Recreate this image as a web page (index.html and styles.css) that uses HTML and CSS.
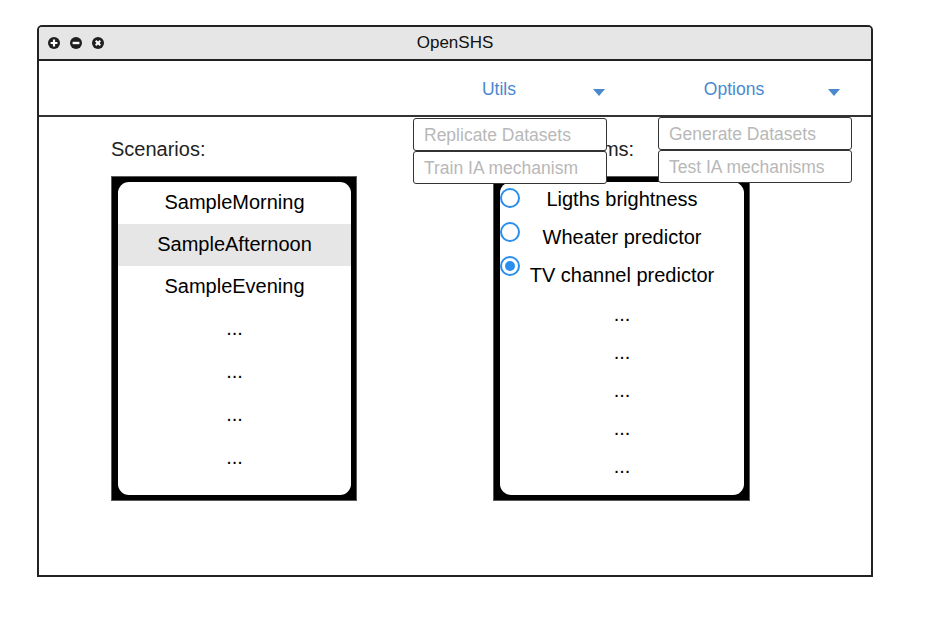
FILE: index.html
```html
<!DOCTYPE html>
<html lang="en">
<head>
<meta charset="utf-8">
<title>OpenSHS</title>
<link rel="stylesheet" href="styles.css">
</head>
<body>
<div class="window">
  <div class="titlebar">
    <div class="controls">
      <svg class="ctl" viewBox="0 0 12 12" width="12" height="12"><circle cx="6" cy="6" r="6" fill="#1f1f1f"/><path d="M6 2.6V9.4M2.6 6H9.4" stroke="#fff" stroke-width="2.2"/></svg>
      <svg class="ctl" viewBox="0 0 12 12" width="12" height="12"><circle cx="6" cy="6" r="6" fill="#1f1f1f"/><path d="M2.6 6H9.4" stroke="#fff" stroke-width="2.4"/></svg>
      <svg class="ctl" viewBox="0 0 12 12" width="12" height="12"><circle cx="6" cy="6" r="6" fill="#1f1f1f"/><path d="M3.7 3.7L8.3 8.3M8.3 3.7L3.7 8.3" stroke="#fff" stroke-width="2"/></svg>
    </div>
    <div class="title">OpenSHS</div>
    <div></div>
  </div>
  <nav class="nav">
    <div class="nav-item nav-utils">
      <span class="nav-label label-utils">Utils</span><span class="caret caret-utils"></span>
      <div class="menu menu-utils">
        <div class="menu-item">Replicate Datasets</div>
        <div class="menu-item">Train IA mechanism</div>
      </div>
    </div>
    <div class="nav-item nav-options">
      <span class="nav-label label-options">Options</span><span class="caret caret-options"></span>
      <div class="menu menu-options">
        <div class="menu-item">Generate Datasets</div>
        <div class="menu-item">Test IA mechanisms</div>
      </div>
    </div>
  </nav>
  <main class="main">
    <section class="col col-left">
      <div class="col-label">Scenarios:</div>
      <div class="frame frame-left">
        <ul class="list">
          <li class="row">SampleMorning</li>
          <li class="row selected">SampleAfternoon</li>
          <li class="row">SampleEvening</li>
          <li class="row dots">...</li>
          <li class="row dots">...</li>
          <li class="row dots">...</li>
          <li class="row dots">...</li>
        </ul>
      </div>
    </section>
    <section class="col col-right">
      <div class="col-label">IA mechanisms:</div>
      <div class="frame frame-right">
        <ul class="list rlist">
          <li class="rrow">Ligths brightness</li>
          <li class="rrow">Wheater predictor</li>
          <li class="rrow">TV channel predictor</li>
          <li class="rrow rdots">...</li>
          <li class="rrow rdots">...</li>
          <li class="rrow rdots">...</li>
          <li class="rrow rdots">...</li>
          <li class="rrow rdots">...</li>
          <span class="radio r1"></span>
          <span class="radio r2"></span>
          <span class="radio r3 checked"></span>
        </ul>
      </div>
    </section>
  </main>
</div>
</body>
</html>
```
FILE: styles.css
```css
* { box-sizing: border-box; }
html, body { margin: 0; padding: 0; background: #fff; }
body {
  font-family: "Liberation Sans", Arial, sans-serif;
  padding: 25px 0 0 37px;
}
.window {
  width: 836px;
  height: 552px;
  border: 2px solid #222;
  border-radius: 5px 5px 0 0;
  display: flex;
  flex-direction: column;
  background: #fff;
}
.titlebar {
  height: 34px;
  flex: none;
  background: #e6e6e6;
  border-bottom: 2px solid #222;
  border-radius: 3px 3px 0 0;
  display: grid;
  grid-template-columns: 1fr auto 1fr;
  align-items: center;
}
.controls {
  display: flex;
  gap: 10px;
  padding-left: 9px;
  padding-bottom: 1px;
}
.ctl { display: block; }
.title {
  font-size: 17px;
  color: #111;
  line-height: 20px;
}
.nav {
  height: 56px;
  flex: none;
  border-bottom: 2px solid #333;
  display: flex;
  align-items: stretch;
}
.nav-item {
  position: relative;
  display: flex;
  align-items: center;
}
.nav-utils { margin-left: 375px; }
.nav-options { margin-left: 53px; }
.nav-label {
  font-size: 17.5px;
  color: #4a88cf;
  text-align: center;
  line-height: 20px;
  padding-top: 1px;
}
.label-utils { width: 170px; }
.label-options { width: 152px; }
.caret {
  width: 0;
  height: 0;
  border-left: 6.5px solid transparent;
  border-right: 6.5px solid transparent;
  border-top: 7px solid #4a88cf;
  margin-top: 8px;
}
.caret-utils { margin-left: 9px; }
.caret-options { margin-left: 18px; }
.menu {
  position: absolute;
  left: -1px;
  width: 194px;
  z-index: 5;
  display: flex;
  flex-direction: column;
}
.menu-options { left: 0; }
.menu-utils { top: 57px; }
.menu-options { top: 56px; }
.menu-item {
  height: 33px;
  border: 1px solid #333;
  border-radius: 3px;
  background: #fff;
  color: #b8b8b8;
  font-size: 17.5px;
  line-height: 32px;
  padding-left: 10px;
  white-space: nowrap;
}
.main {
  flex: 1;
  display: flex;
  gap: 136px;
  padding: 21px 0 0 72px;
}
.col { display: flex; flex-direction: column; }
.col-left { width: 246px; }
.col-right { width: 257px; }
.col-label {
  font-size: 20px;
  line-height: 23px;
  color: #222;
  margin-bottom: 15px;
  white-space: nowrap;
}
.frame {
  height: 325px;
  background: #000;
  border: 1px solid #5a5a5a;
  padding: 5px 5px 5px 6px;
}
.list {
  list-style: none;
  margin: 0;
  padding: 0;
  height: 100%;
  background: #fff;
  border-radius: 11px;
  overflow: hidden;
  position: relative;
}
.row {
  height: 42px;
  line-height: 40px;
  padding-bottom: 2px;
  font-size: 20px;
  color: #000;
  text-align: center;
}
.row.selected { background: #e6e6e6; }
.row.dots {
  height: 43px;
  line-height: 41px;
  padding-bottom: 2px;
}
.rrow {
  height: 38px;
  line-height: 34px;
  padding-bottom: 4px;
  font-size: 20px;
  color: #000;
  text-align: center;
}
.rrow.rdots {
  line-height: 36px;
  padding-bottom: 2px;
}
.radio {
  position: absolute;
  left: 0;
  width: 20px;
  height: 20px;
  border: 2px solid #2b8eef;
  border-radius: 50%;
  background: #fff;
}
.r1 { top: 6px; }
.r2 { top: 40px; }
.r3 { top: 74px; }
.radio.checked::after {
  content: "";
  position: absolute;
  left: 3px;
  top: 3px;
  width: 10px;
  height: 10px;
  border-radius: 50%;
  background: #2b8eef;
}
```
